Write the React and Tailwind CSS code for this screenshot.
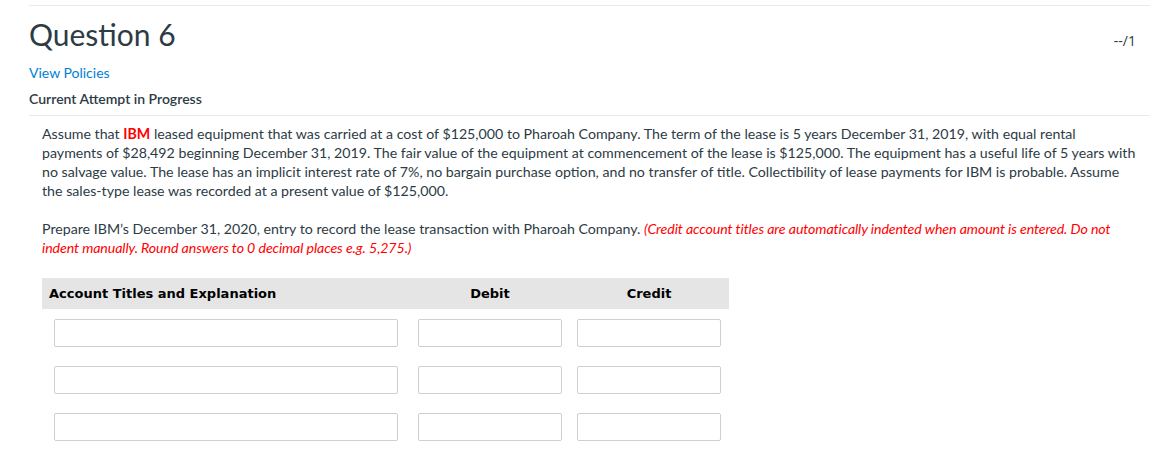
import React from "react";

const rows = [0, 1, 2];

export default function App() {
  return (
    <div className="w-[1166px] h-[465px] bg-white text-[#2d3b45] font-['Lato','Open_Sans',sans-serif] pt-[5px] pl-[29px] pr-[16px]">
      <div className="border-t border-[#e8eaec]">
        <div className="flex items-start justify-between pt-[8px]">
          <h1 className="text-[30px] leading-[40px] font-normal">Question 6</h1>
          <span className="text-[14px] mt-[16px] mr-[14px] font-['Open_Sans',sans-serif]">--/1</span>
        </div>
        <div className="text-[14px] leading-[18px] text-[#0081d5] mt-[10px]">View Policies</div>
        <div className="text-[14px] leading-[18px] font-semibold mt-[8px]">Current Attempt in Progress</div>
      </div>

      <div className="border-t border-[#e8eaec] mt-[7px] pl-[13px] pt-[8px] text-[14.2px] leading-[19px]">
        <p className="whitespace-nowrap">
          Assume that <span className="text-[#ff0000] font-bold">IBM</span> leased equipment that was carried at a cost of $125,000 to Pharoah Company. The term of the lease is 5 years December 31, 2019, with equal rental
          <br />
          payments of $28,492 beginning December 31, 2019. The fair value of the equipment at commencement of the lease is $125,000. The equipment has a useful life of 5 years with
          <br />
          no salvage value. The lease has an implicit interest rate of 7%, no bargain purchase option, and no transfer of title. Collectibility of lease payments for IBM is probable. Assume
          <br />
          the sales-type lease was recorded at a present value of $125,000.
        </p>
        <p className="mt-[19px] whitespace-nowrap">
          Prepare IBM’s December 31, 2020, entry to record the lease transaction with Pharoah Company.{" "}
          <span className="text-[#ff0000] italic tracking-[-0.1px]">
            (Credit account titles are automatically indented when amount is entered. Do not
            <br />
            indent manually. Round answers to 0 decimal places e.g. 5,275.)
          </span>
        </p>

        <div className="w-[687px] mt-[21px] font-['DejaVu_Sans','Verdana',sans-serif] text-[13px] text-black">
          <div className="flex items-center h-[31px] bg-[#e5e5e5] font-bold">
            <div className="w-[376px] pl-[7px]">Account Titles and Explanation</div>
            <div className="w-[144px] text-center">Debit</div>
            <div className="w-[15px]" />
            <div className="w-[144px] text-center">Credit</div>
          </div>
          <div className="flex flex-col gap-[19px] pt-[10px]">
            {rows.map((r) => (
              <div key={r} className="flex pl-[12px]">
                <input className="w-[344px] h-[28px] border border-[#cfcfcf] rounded-[2px] bg-white" />
                <input className="w-[144px] h-[28px] ml-[20px] border border-[#cfcfcf] rounded-[2px] bg-white" />
                <input className="w-[144px] h-[28px] ml-[15px] border border-[#cfcfcf] rounded-[2px] bg-white" />
              </div>
            ))}
          </div>
        </div>
      </div>
    </div>
  );
}
